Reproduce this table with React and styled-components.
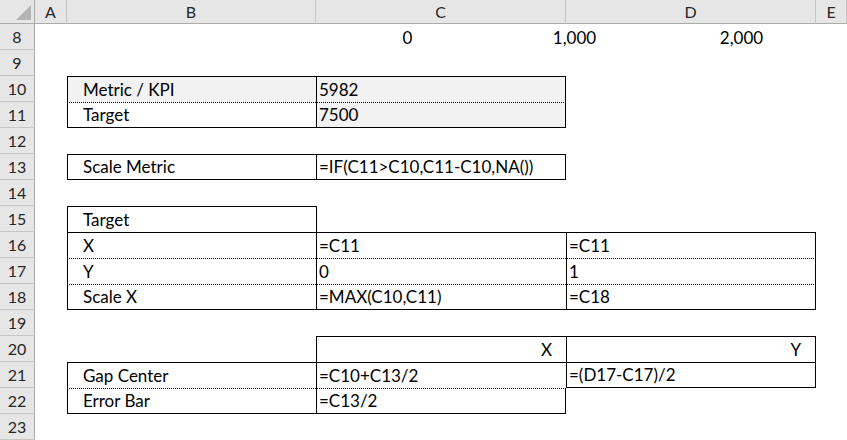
import React from "react";
import styled, { createGlobalStyle } from "styled-components";

const GlobalStyle = createGlobalStyle`
  html, body {
    margin: 0;
    padding: 0;
    background: #fff;
  }
  body {
    font-family: "Lato", "Liberation Sans", sans-serif;
  }
`;

const Sheet = styled.div`
  display: grid;
  grid-template-columns: 35px 32px 249px 250px 250px 31px;
  grid-template-rows: 24px repeat(16, 26px);
  width: 847px;
  height: 440px;
  overflow: hidden;
  background: #fff;
  color: #000;
`;

const Corner = styled.div`
  position: relative;
  background: #e6e6e6;
  border-right: 1px solid #ababab;
  border-bottom: 1px solid #ababab;
  box-sizing: border-box;
  svg {
    position: absolute;
    right: 3px;
    bottom: 3px;
  }
`;

const ColHead = styled.div`
  display: flex;
  align-items: center;
  justify-content: center;
  background: #e6e6e6;
  border-right: 1px solid #c6c6c6;
  border-bottom: 1px solid #ababab;
  box-sizing: border-box;
  font-size: 16px;
  color: #262626;
`;

const RowHead = styled.div`
  display: flex;
  align-items: center;
  justify-content: center;
  background: #e6e6e6;
  border-right: 1px solid #ababab;
  border-bottom: 1px solid #c6c6c6;
  box-sizing: border-box;
  font-size: 16px;
  color: #262626;
`;

const Cell = styled.div`
  display: flex;
  align-items: flex-end;
  justify-content: ${({ $align }) => ($align === "right" ? "flex-end" : "flex-start")};
  box-sizing: border-box;
  padding: 0 ${({ $align }) => ($align === "right" ? "14px" : "2px")} 1px
    ${({ $indent }) => ($indent ? "15px" : "2px")};
  background: ${({ $fill }) => ($fill ? "#f2f2f2" : "transparent")};
  border-top: ${({ $t }) => $t || "none"};
  border-left: ${({ $l }) => $l || "none"};
  border-right: ${({ $r }) => $r || "none"};
  border-bottom: ${({ $b }) => $b || "none"};
  font-size: 17px;
  line-height: 22px;
  white-space: nowrap;
  overflow: visible;
`;

const AxisRow = styled.div`
  grid-column: 3 / 7;
  display: flex;
  align-items: center;
  padding-left: 257px;
  font-size: 17px;
`;

const AxisLabel = styled.span`
  width: 167px;
  text-align: center;
`;

const S = "1px solid #000";
const D = "1px dotted #000";

const columns = ["A", "B", "C", "D", "E"];

const rows = [
  { n: 9 },
  {
    n: 10,
    B: { t: S, l: S, fill: true, indent: true, text: "Metric / KPI" },
    C: { t: S, l: S, r: S, fill: true, text: "5982" },
  },
  {
    n: 11,
    B: { t: D, l: S, b: S, indent: true, text: "Target" },
    C: { t: D, l: S, r: S, b: S, fill: true, text: "7500" },
  },
  { n: 12 },
  {
    n: 13,
    B: { t: S, l: S, b: S, indent: true, text: "Scale Metric" },
    C: { t: S, l: S, r: S, b: S, text: "=IF(C11>C10,C11-C10,NA())" },
  },
  { n: 14 },
  {
    n: 15,
    B: { t: S, l: S, indent: true, text: "Target" },
    C: { l: S },
  },
  {
    n: 16,
    B: { t: S, l: S, indent: true, text: "X" },
    C: { t: S, l: S, text: "=C11" },
    D: { t: S, l: S, r: S, text: "=C11" },
  },
  {
    n: 17,
    B: { t: D, l: S, indent: true, text: "Y" },
    C: { t: D, l: S, text: "0" },
    D: { t: D, l: S, r: S, text: "1" },
  },
  {
    n: 18,
    B: { t: D, l: S, b: S, indent: true, text: "Scale X" },
    C: { t: D, l: S, b: S, text: "=MAX(C10,C11)" },
    D: { t: D, l: S, r: S, b: S, text: "=C18" },
  },
  { n: 19 },
  {
    n: 20,
    C: { t: S, l: S, align: "right", text: "X" },
    D: { t: S, l: S, r: S, align: "right", text: "Y" },
  },
  {
    n: 21,
    B: { t: S, l: S, indent: true, text: "Gap Center" },
    C: { t: S, l: S, text: "=C10+C13/2" },
    D: { t: S, l: S, r: S, b: S, text: "=(D17-C17)/2" },
  },
  {
    n: 22,
    B: { t: D, l: S, b: S, indent: true, text: "Error Bar" },
    C: { t: D, l: S, r: S, b: S, text: "=C13/2" },
  },
  { n: 23 },
];

function SheetCell({ spec }) {
  if (!spec) return <Cell />;
  return (
    <Cell
      $t={spec.t}
      $l={spec.l}
      $r={spec.r}
      $b={spec.b}
      $fill={spec.fill}
      $indent={spec.indent}
      $align={spec.align}
    >
      {spec.text}
    </Cell>
  );
}

export default function App() {
  return (
    <>
      <GlobalStyle />
      <Sheet>
        <Corner>
          <svg width="15" height="15" viewBox="0 0 15 15">
            <polygon points="15,0 15,15 0,15" fill="#b4b4b4" />
          </svg>
        </Corner>
        {columns.map((c) => (
          <ColHead key={c}>{c}</ColHead>
        ))}

        <RowHead>8</RowHead>
        <Cell />
        <AxisRow>
          <AxisLabel>0</AxisLabel>
          <AxisLabel>1,000</AxisLabel>
          <AxisLabel>2,000</AxisLabel>
        </AxisRow>

        {rows.map((row) => (
          <React.Fragment key={row.n}>
            <RowHead>{row.n}</RowHead>
            {columns.map((c) => (
              <SheetCell key={c} spec={row[c]} />
            ))}
          </React.Fragment>
        ))}
      </Sheet>
    </>
  );
}
